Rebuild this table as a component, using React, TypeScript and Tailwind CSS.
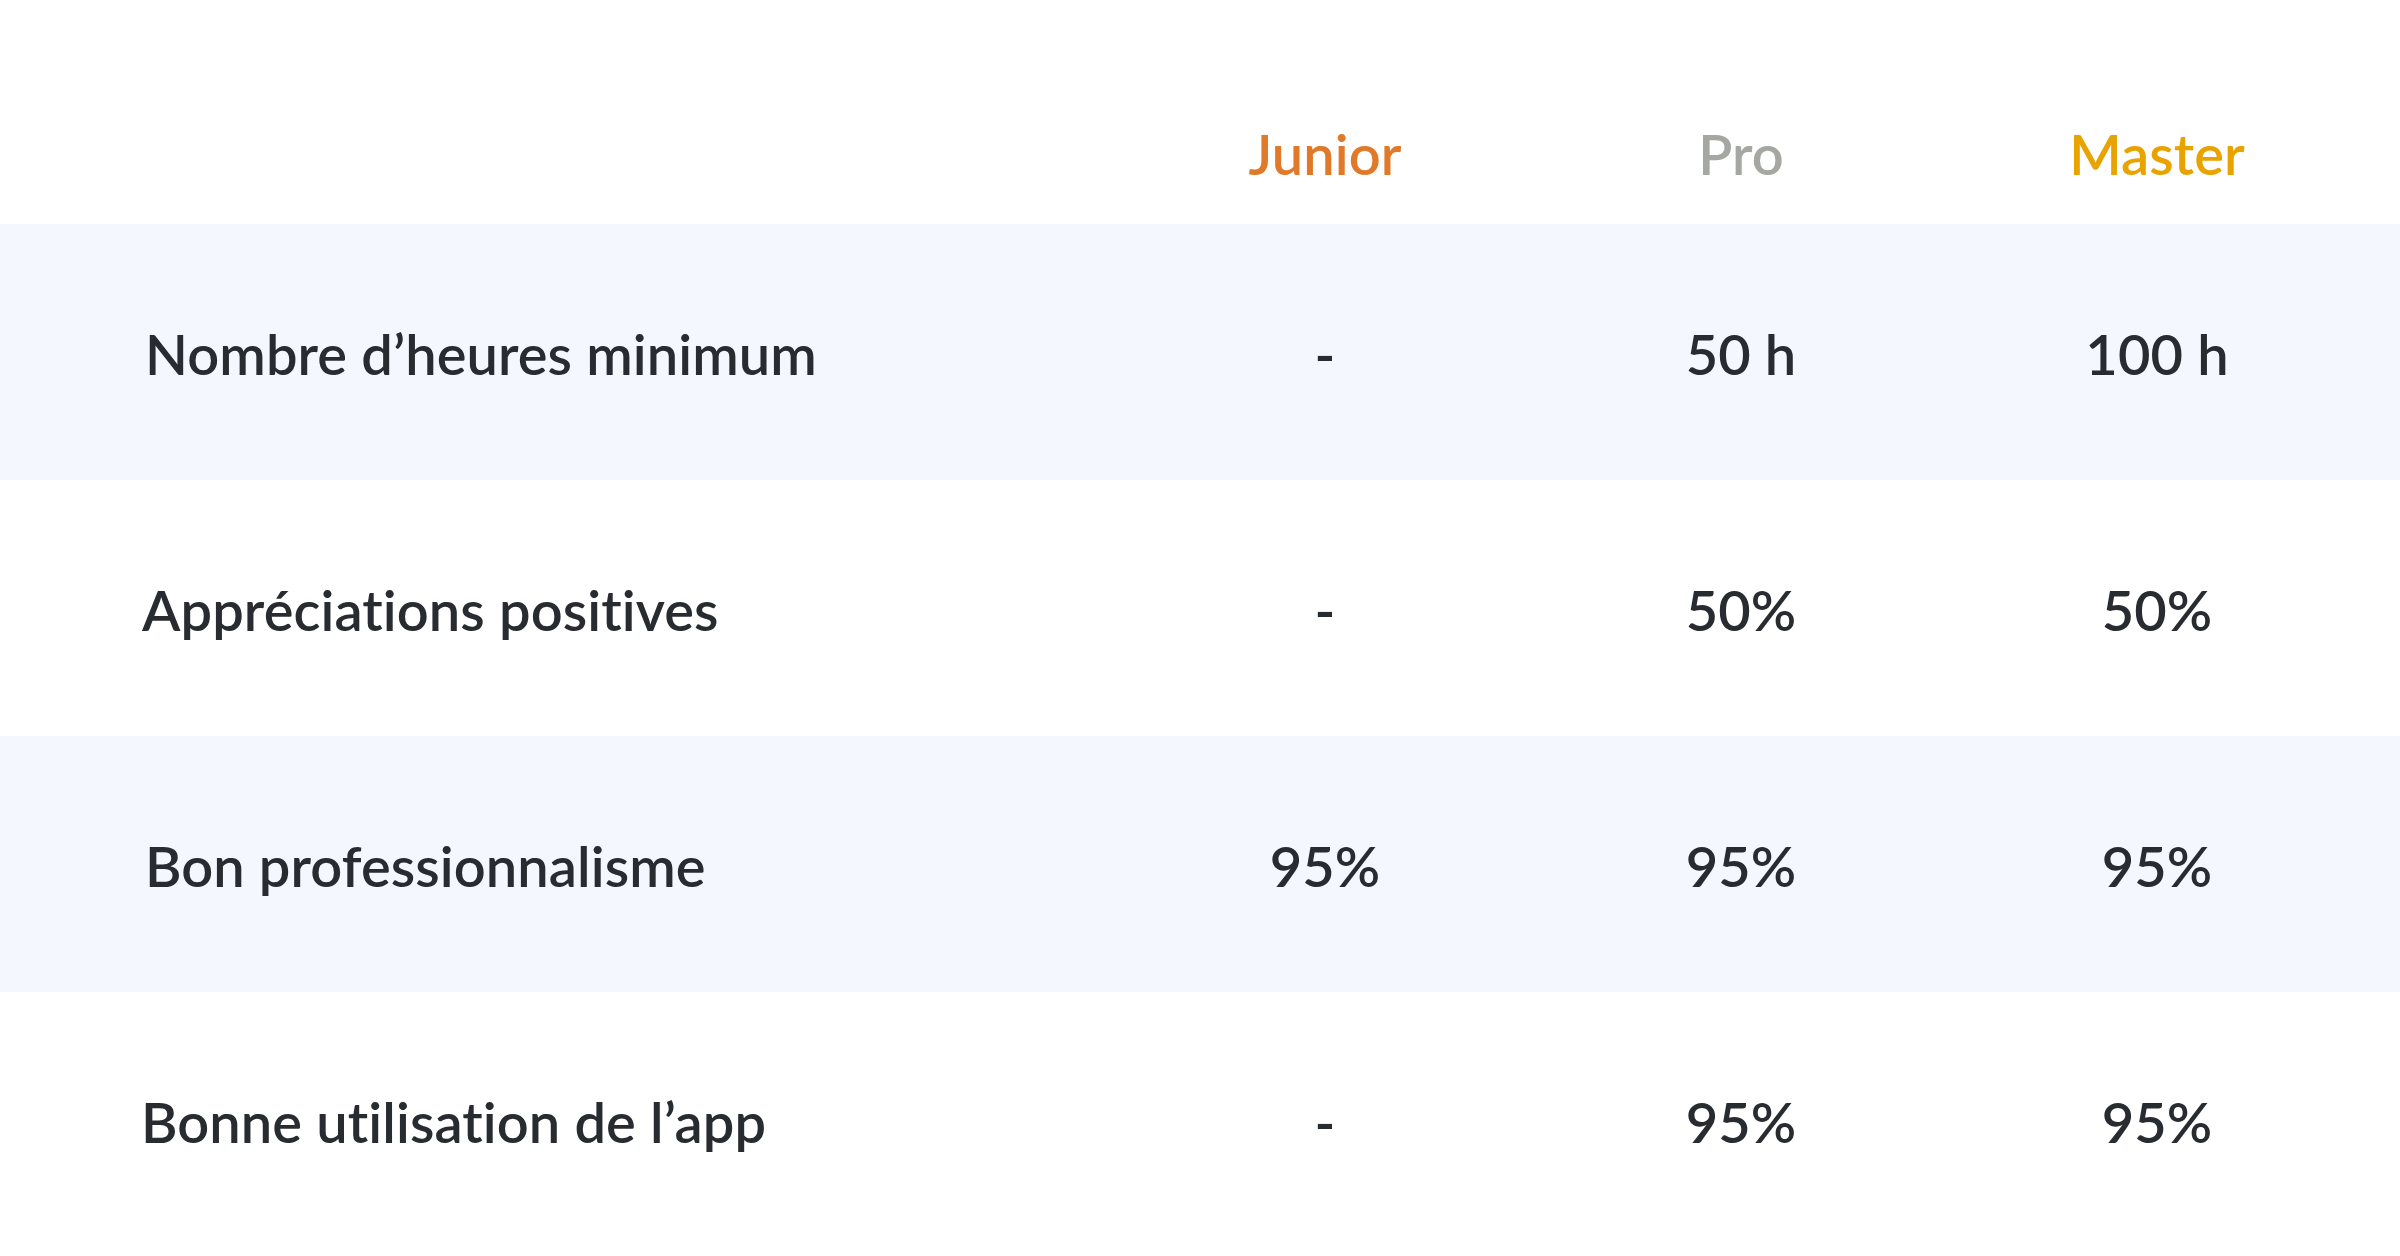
const rows = [
  { label: 'Nombre d’heures minimum', values: ['-', '50 h', '100 h'], shaded: true, pad: 'pl-[145px]' },
  { label: 'Appréciations positives', values: ['-', '50%', '50%'], shaded: false, pad: 'pl-[142px]' },
  { label: 'Bon professionnalisme', values: ['95%', '95%', '95%'], shaded: true, pad: 'pl-[145px]' },
  { label: 'Bonne utilisation de l’app', values: ['-', '95%', '95%'], shaded: false, pad: 'pl-[141px]' },
]

export default function App() {
  return (
    <div className="min-h-screen w-full bg-white text-[#282b30] font-['Lato',sans-serif] font-semibold tracking-[0.006em] [font-variant-ligatures:none]">
      {/* Header */}
      <div className="grid grid-cols-[1117px_416px_416px_416px] h-[224px] items-center pt-[84px] text-[56px] leading-none">
        <div />
        <div className="text-center text-[#e07a2a]">Junior</div>
        <div className="text-center text-[#a5a7a3]">Pro</div>
        <div className="text-center text-[#e9a300]">Master</div>
      </div>

      {rows.map((row) => (
        <div
          key={row.label}
          className={`grid grid-cols-[1117px_416px_416px_416px] h-[256px] items-center pt-[4px] text-[56px] leading-none ${row.shaded ? 'bg-[#f4f7fe]' : 'bg-white'}`}
        >
          <div className={row.pad}>{row.label}</div>
          {row.values.map((v, i) => (
            <div key={i} className="text-center">{v}</div>
          ))}
        </div>
      ))}
    </div>
  )
}
